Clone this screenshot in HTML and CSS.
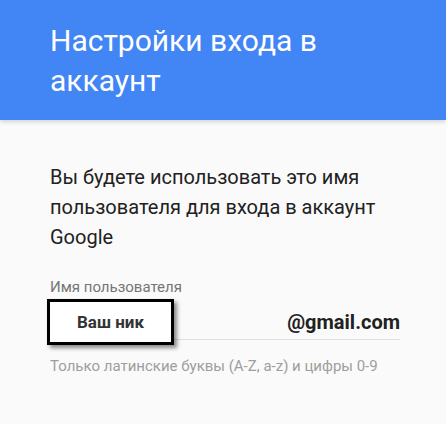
FILE: index.html
```html
<!DOCTYPE html>
<html lang="ru">
<head>
    <meta charset="UTF-8">
    <meta name="viewport" content="width=device-width, initial-scale=1.0">
    <title>Настройки входа в аккаунт</title>
    <link rel="stylesheet" href="styles.css">
</head>
<body>

<!-- Header -->
<div class="header">
    <h1>Настройки входа в аккаунт</h1>
</div>

<!-- Content -->
<div class="content">
    <p class="intro">Вы будете использовать это имя пользователя для входа в аккаунт Google</p>

    <div class="field">
        <label class="field-label" for="username">Имя пользователя</label>
        <div class="field-row">
            <div class="nick-box" id="username">Ваш ник</div>
            <div class="field-line">
                <span class="domain">@gmail.com</span>
            </div>
        </div>
        <div class="field-hint">Только латинские буквы (A-Z, a-z) и цифры 0-9</div>
    </div>
</div>

</body>
</html>
```

FILE: styles.css
```css
body {
    font-family: Roboto, "Noto Sans", Arial, sans-serif;
    margin: 0;
    background-color: #fafafa;
}

/* Header */
.header {
    background-color: #4285f4;
    height: 120px;
    box-sizing: border-box;
    padding: 21px 50px 0 50px;
    box-shadow: 0 2px 4px rgba(0, 0, 0, 0.15);
}

.header h1 {
    margin: 0;
    color: white;
    font-size: 30px;
    font-weight: 400;
    line-height: 40px;
    max-width: 300px;
}

/* Content */
.content {
    padding: 0 46px 0 50px;
}

.intro {
    margin: 0;
    padding-top: 42px;
    font-size: 20px;
    line-height: 30px;
    color: #212121;
}

.field {
    margin-top: 27px;
}

.field-label {
    display: block;
    font-size: 15px;
    line-height: 17px;
    color: #757575;
}

.field-row {
    display: flex;
    align-items: flex-end;
    margin-top: 3px;
    margin-left: -3px;
}

.nick-box {
    width: 121px;
    height: 40px;
    border: 3px solid #000;
    background-color: white;
    box-shadow: 3px 3px 4px rgba(0, 0, 0, 0.45);
    display: flex;
    align-items: center;
    justify-content: center;
    font-size: 17px;
    font-weight: 700;
    color: #333;
    position: relative;
    z-index: 1;
}

.field-line {
    flex: 1;
    display: flex;
    justify-content: flex-end;
    border-bottom: 1px solid #e0e0e0;
    padding-bottom: 5px;
    margin-bottom: 5px;
}

.domain {
    font-size: 20px;
    font-weight: 700;
    color: #212121;
}

.field-hint {
    margin-top: 12px;
    font-size: 15px;
    color: #9e9e9e;
}
```
